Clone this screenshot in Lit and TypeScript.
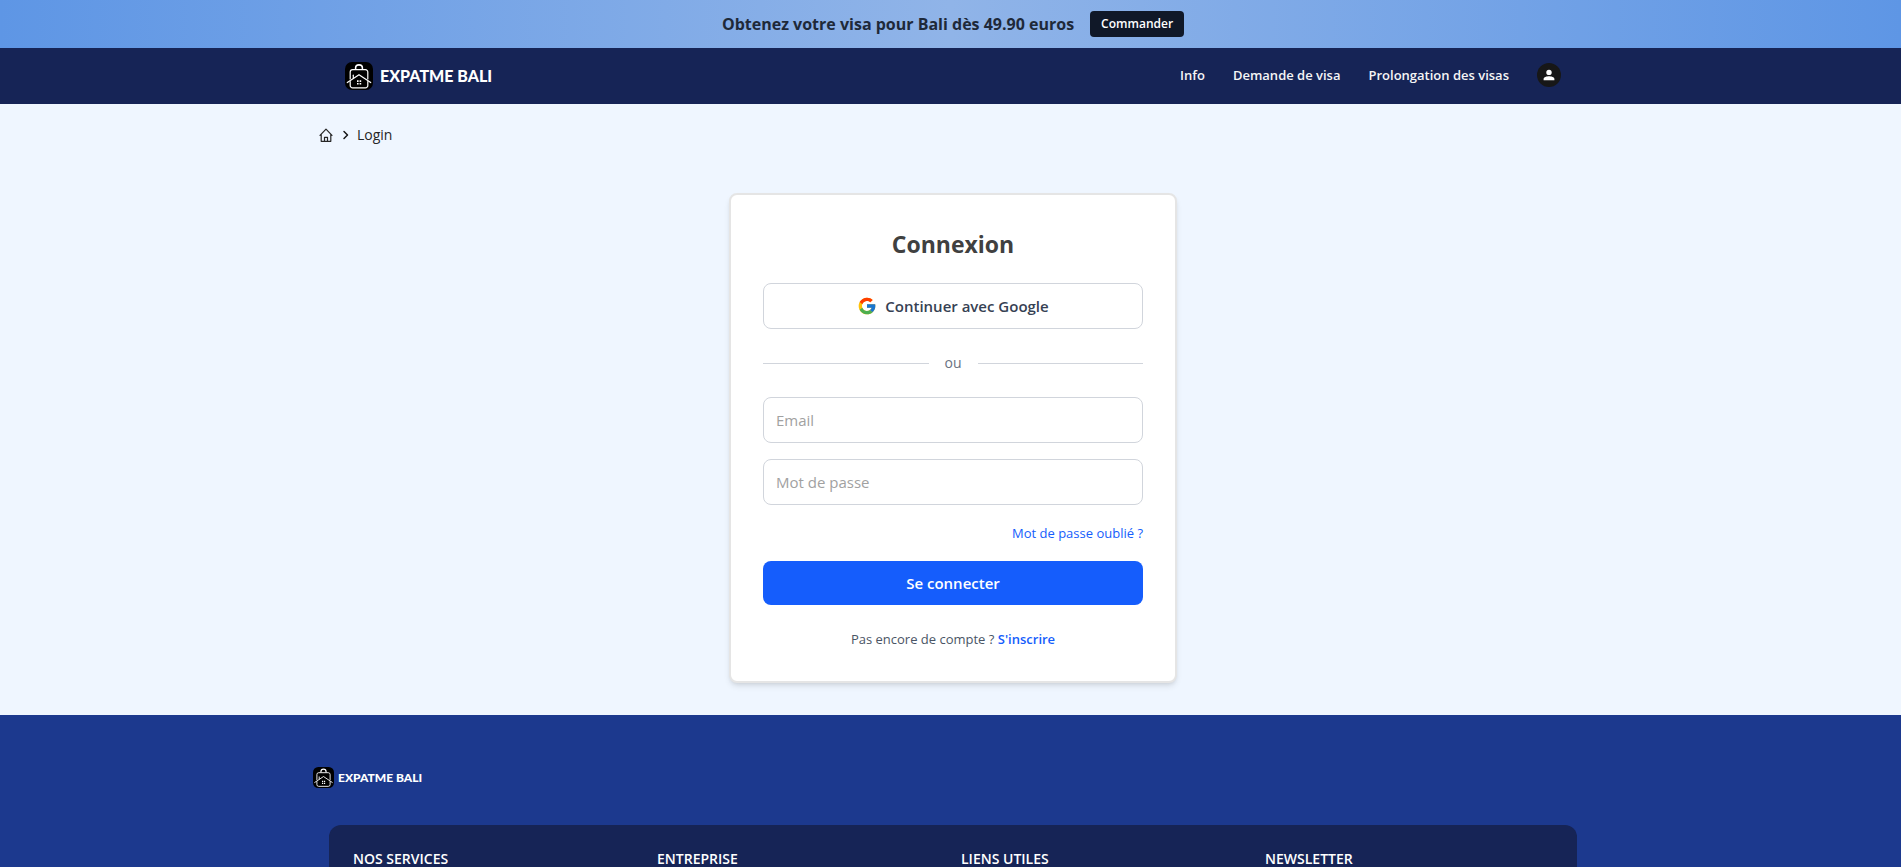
import { LitElement, html, css, svg } from "lit";
import { customElement, property } from "lit/decorators.js";

@customElement("brand-logo")
class BrandLogo extends LitElement {
  @property({ type: Boolean, reflect: true }) small = false;

  static styles = css`
    :host { display: block; }
    .link {
      display: flex; align-items: center; gap: 7px;
      color: #fff; text-decoration: none;
      font: 900 16px/28px Lato, sans-serif;
    }
    .mark { width: 28px; height: 28px; display: block; }
    :host([small]) .link { gap: 4px; font-size: 12px; line-height: 21px; }
    :host([small]) .mark { width: 21px; height: 21px; }
  `;

  render() {
    return html`<a class="link" href="#">
      <svg class="mark" viewBox="0 0 28 28" fill="none" stroke="#fff" stroke-width="1.2"
        stroke-linecap="round" stroke-linejoin="round" aria-hidden="true">
        <rect width="28" height="28" rx="7" fill="#000" stroke="none" />
        <path d="M10.6 6.6V6a3.4 3.1 0 0 1 6.8 0v.6" stroke-width="1.6" />
        <path d="M5.2 17V10a2.4 2.4 0 0 1 2.4-2.4h12.8a2.4 2.4 0 0 1 2.4 2.400v7" />
        <path d="M2.3 20.6 14 12.7l11.7 7.9" />
        <path d="M8.3 16v-2.8" />
        <path d="M5.2 19.500v3.900a2.4 2.4 0 0 0 2.4 2.4h12.8a2.4 2.4 0 0 0 2.4-2.4v-3.900" />
        <path d="M12 18.3h1.6v1.6H12zM14.6 18.3h1.6v1.6h-1.6zM12 21h1.6v1.6H12zM14.6 21h1.6v1.6h-1.6z"
          fill="#fff" stroke="none" />
      </svg>
      <span>EXPATME BALI</span>
    </a>`;
  }
}

const homeIcon = svg`<path d="M1 7.4 7 1.2l6 6.2M2.2 6.4v6.9h9.6V6.4M5.5 13.2V9.3h3v3.9" />`;

@customElement("app-root")
class AppRoot extends LitElement {
  static styles = css`
    :host {
      display: block; min-height: 100vh; background: #eff6ff; color: #262626;
      font: 400 14px/20px "Open Sans", "Noto Sans", sans-serif;
    }
    * { box-sizing: border-box; }
    a { text-decoration: none; color: inherit; }
    button, input { font-family: inherit; }
    .banner, .header, .main, .footer { padding-left: 5px; }
    .banner {
      height: 48px; display: flex; align-items: center; justify-content: center; gap: 16px;
      background: linear-gradient(90deg, #5e96e5, #90b4e8 50%, #5e96e5);
    }
    .offer { margin: 0; font-size: 16px; font-weight: 700; color: #1e2939; }
    .order {
      padding: 3px 11px; border-radius: 4px; background: #101828; color: #fff;
      font-size: 12px; font-weight: 600;
    }
    .header { background: #162456; }
    .wrap { max-width: 1280px; margin: 0 auto; }
    .bar {
      height: 56px; padding: 0 32px; display: flex; align-items: center; justify-content: space-between;
    }
    .nav {
      display: flex; align-items: center; gap: 28px; padding-bottom: 2px;
      color: #f5f5f5; font-size: 13px; font-weight: 600;
    }
    .avatar {
      width: 24px; height: 24px; padding: 0; border: 0; border-radius: 50%; background: #171717;
      display: grid; place-items: center;
    }
    .crumbs { display: flex; align-items: center; gap: 8px; height: 24px; padding-left: 6px; }
    .crumbs a { display: flex; }
    .main { padding-top: 19px; padding-bottom: 32px; }
    .card {
      max-width: 448px; margin: 46px auto 0; padding: 32px; background: #fff;
      border: 2px solid #e5e5e5; border-radius: 8px;
      box-shadow: 0 4px 6px -1px rgb(0 0 0 / .1), 0 2px 4px -2px rgb(0 0 0 / .1);
    }
    .title { margin: 0 0 22px; text-align: center; font-size: 23px; line-height: 34px; color: #404040; }
    .google {
      width: 100%; height: 46px; border: 1px solid #d1d5dc; border-radius: 8px; background: #fff;
      display: flex; align-items: center; justify-content: center; gap: 8px;
      color: #364153; font-size: 15px; font-weight: 600;
    }
    .or { display: flex; align-items: center; gap: 16px; margin: 24px 0; color: #6a7282; }
    .line { flex: 1; height: 2px; border-bottom: 1px solid #d1d5dc; }
    .form { display: flex; flex-direction: column; gap: 16px; }
    .field {
      width: 100%; height: 46px; padding: 0 12px; border: 1px solid #d1d5dc; border-radius: 8px;
      background: #fff; font-size: 15px; color: #262626;
    }
    .field::placeholder { color: #a1a1a1; opacity: 1; }
    .forgot { align-self: flex-end; line-height: 24px; color: #155dfc; font-size: 13px; }
    .submit {
      height: 44px; border: 0; border-radius: 8px; background: #155dfc; color: #fff;
      font-size: 15px; font-weight: 600;
    }
    .signup { margin: 24px 0 0; text-align: center; color: #4a5565; font-size: 13px; }
    .signup a { color: #155dfc; font-weight: 600; }
    .footer { background: #1c398e; padding-top: 52px; }
    .panel {
      margin: 37px 16px 0; padding: 24px; border-radius: 12px; background: #162456;
      display: grid; grid-template-columns: repeat(4, 1fr); gap: 16px;
    }
    .panel h2 { margin: 0; font-size: 14px; line-height: 20px; font-weight: 600; color: #fff; }
    .clip { height: 100vh; overflow: hidden; }
  `;

  render() {
    return html`<div class="clip">
      <div class="banner">
        <p class="offer">Obtenez votre visa pour Bali dès 49.90 euros</p>
        <a class="order" href="#">Commander</a>
      </div>
      <header class="header">
        <div class="wrap bar">
          <brand-logo></brand-logo>
          <nav class="nav">
            <a href="#">Info</a>
            <a href="#">Demande de visa</a>
            <a href="#">Prolongation des visas</a>
            <button class="avatar" aria-label="Compte">
              <svg width="12" height="12" viewBox="0 0 12 12" fill="#fff">
                <circle cx="6" cy="3.4" r="2.7" />
                <path d="M.6 11.2V10C.6 8 3.6 7.2 6 7.2s5.4.8 5.4 2.8V11.2z" />
              </svg>
            </button>
          </nav>
        </div>
      </header>
      <main class="main">
        <nav class="wrap crumbs" aria-label="Fil d'Ariane">
          <a href="#" aria-label="Accueil">
            <svg width="14" height="14" viewBox="0 0 14 14" fill="none" stroke="#262626" stroke-width="1.2"
              stroke-linejoin="round" stroke-linecap="round">${homeIcon}</svg>
          </a>
          <svg width="8" height="10" viewBox="0 0 8 10" fill="none" stroke="#171717" stroke-width="1.5"
            stroke-linecap="round" stroke-linejoin="round"><path d="M3 1.5 6.5 5 3 8.5" /></svg>
          <span>Login</span>
        </nav>
        <section class="card">
          <h1 class="title">Connexion</h1>
          <button class="google">
            <svg width="20" height="20" viewBox="0 0 48 48" aria-hidden="true">
              <path fill="#FFC107" d="M43.611 20.083H42V20H24v8h11.303c-1.649 4.657-6.08 8-11.303 8-6.627 0-12-5.373-12-12s5.373-12 12-12c3.059 0 5.842 1.154 7.961 3.039l5.657-5.657C34.046 6.053 29.268 4 24 4 12.955 4 4 12.955 4 24s8.955 20 20 20 20-8.955 20-20c0-1.341-.138-2.65-.389-3.917z" />
              <path fill="#FF3D00" d="m6.306 14.691 6.571 4.819C14.655 15.108 18.961 12 24 12c3.059 0 5.842 1.154 7.961 3.039l5.657-5.657C34.046 6.053 29.268 4 24 4 16.318 4 9.656 8.337 6.306 14.691z" />
              <path fill="#4CAF50" d="M24 44c5.166 0 9.86-1.977 13.409-5.192l-6.19-5.238A11.91 11.91 0 0 1 24 36c-5.202 0-9.619-3.317-11.283-7.946l-6.522 5.025C9.505 39.556 16.227 44 24 44z" />
              <path fill="#1976D2" d="M43.611 20.083H42V20H24v8h11.303a12.04 12.04 0 0 1-4.087 5.571l6.193 5.238C36.971 39.205 44 34 44 24c0-1.341-.138-2.65-.389-3.917z" />
            </svg>
            Continuer avec Google
          </button>
          <div class="or"><span class="line"></span>ou<span class="line"></span></div>
          <form class="form" @submit=${(e: Event) => e.preventDefault()}>
            <input class="field" type="email" placeholder="Email" aria-label="Email" />
            <input class="field" type="password" placeholder="Mot de passe" aria-label="Mot de passe" />
            <a class="forgot" href="#">Mot de passe oublié ?</a>
            <button class="submit">Se connecter</button>
          </form>
          <p class="signup">Pas encore de compte ? <a href="#">S'inscrire</a></p>
        </section>
      </main>
      <footer class="footer">
        <div class="wrap">
          <brand-logo small></brand-logo>
          <div class="panel">
            <h2>NOS SERVICES</h2>
            <h2>ENTREPRISE</h2>
            <h2>LIENS UTILES</h2>
            <h2>NEWSLETTER</h2>
          </div>
        </div>
      </footer>
    </div>`;
  }
}
